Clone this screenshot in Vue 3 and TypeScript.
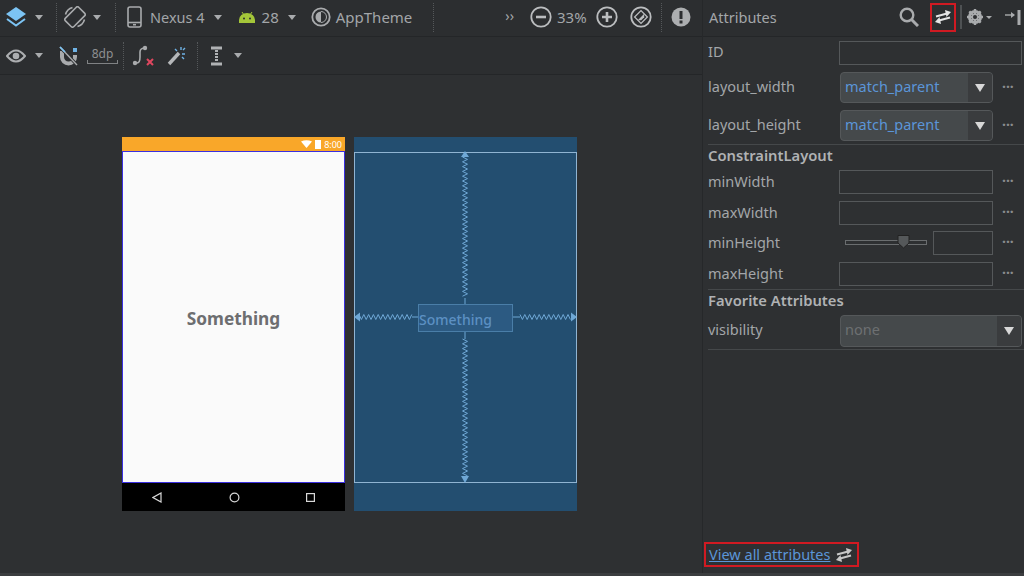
<script setup lang="ts">
const zigV = (x: number, y1: number, y2: number): string => {
  const pts: string[] = []
  let side = -1
  for (let y = y1; y <= y2; y += 2.4) {
    pts.push(`${x + side * 2.5},${y}`)
    side = -side
  }
  return pts.join(' ')
}
const zigH = (y: number, x1: number, x2: number): string => {
  const pts: string[] = []
  let side = -1
  for (let x = x1; x <= x2; x += 2.4) {
    pts.push(`${x},${y + side * 2.5}`)
    side = -side
  }
  return pts.join(' ')
}
const springs: string[] = [zigV(111, 6, 147), zigV(111, 188, 325), zigH(166, 5, 58), zigH(166, 166, 218)]
const constraintRows: { label: string; slider?: boolean }[] = [
  { label: 'minWidth' },
  { label: 'maxWidth' },
  { label: 'minHeight', slider: true },
  { label: 'maxHeight' }
]
const dropRows: string[] = ['layout_width', 'layout_height']
</script>

<template>
  <div class="app">
    <div class="main">
      <div class="left">
        <div class="bar bar1">
          <svg class="i ml5" width="22" height="22" viewBox="0 0 22 22"><path d="M11 1 21 8 11 15 1 8Z" fill="#7cc4f4"/><path d="M2 13 11 19.5 20 13" fill="none" stroke="#7cc4f4" stroke-width="2"/></svg>
          <span class="caret ml8"></span>
          <span class="sep ml13"></span>
          <svg class="i ml7" width="22" height="22" viewBox="0 0 22 22" fill="none" stroke="#a9abad" stroke-width="1.6"><rect x="5" y="1.5" width="12" height="19" rx="2" transform="rotate(45 11 11)"/><path d="M1.5 8.5A10 10 0 0 1 8.5 1.5M20.5 13.5A10 10 0 0 1 13.5 20.5"/></svg>
          <span class="caret ml7"></span>
          <span class="sep ml14"></span>
          <svg class="i ml11" width="15" height="22" viewBox="0 0 15 22" fill="none" stroke="#a9abad" stroke-width="1.6"><rect x="1" y="1" width="13" height="20" rx="2"/><path d="M1 16.5H14"/><path d="M6 18.7H9"/></svg>
          <span class="txt narrow ml8">Nexus 4</span>
          <span class="caret ml9"></span>
          <svg class="i ml17" width="16" height="11" viewBox="0 0 16 11"><path d="M0 11V8A8 7 0 0 1 16 8V11Z" fill="#a4c639"/><path d="M3 0 5 3M13 0 11 3" stroke="#a4c639" stroke-width="1"/><circle cx="5" cy="6.5" r="1" fill="#2c2e30"/><circle cx="11" cy="6.5" r="1" fill="#2c2e30"/></svg>
          <span class="txt ml7">28</span>
          <span class="caret ml9"></span>
          <svg class="i ml15" width="20" height="20" viewBox="0 0 20 20"><circle cx="10" cy="10" r="8.7" fill="none" stroke="#a9abad" stroke-width="1.8"/><path d="M10 4.5A5.5 5.5 0 0 0 10 15.5Z" fill="#a9abad"/><path d="M10 4.5A5.5 5.5 0 0 1 10 15.5" fill="none" stroke="#a9abad"/></svg>
          <span class="txt ml5">AppTheme</span>
          <span class="sep ml21"></span>
          <span class="more">››</span>
          <svg class="i ml16" width="22" height="22" viewBox="0 0 22 22" fill="none" stroke="#bbbdbf"><circle cx="11" cy="11" r="9.7" stroke-width="1.8"/><path d="M6 11H16" stroke-width="2.6"/></svg>
          <span class="txt ml5">33%</span>
          <svg class="i ml9" width="22" height="22" viewBox="0 0 22 22" fill="none" stroke="#bbbdbf"><circle cx="11" cy="11" r="9.7" stroke-width="1.8"/><path d="M6 11H16M11 6V16" stroke-width="2.6"/></svg>
          <svg class="i ml12" width="22" height="22" viewBox="0 0 22 22"><circle cx="11" cy="11" r="9.7" fill="none" stroke="#bbbdbf" stroke-width="1.8"/><rect x="6.5" y="6.5" width="9" height="9" fill="none" stroke="#bbbdbf" stroke-width="1.3" transform="rotate(45 11 11)"/><path d="M7.8 14.2 14.2 7.8 14.2 11.2 11.2 14.2Z" fill="#bbbdbf"/></svg>
          <span class="sep ml9"></span>
          <svg class="i ml9" width="20" height="20" viewBox="0 0 20 20"><circle cx="10" cy="10" r="9.5" fill="#acaeb0"/><rect x="8.5" y="4" width="3" height="8" fill="#2c2e30"/><rect x="8.5" y="13.5" width="3" height="3" fill="#2c2e30"/></svg>
        </div>
        <div class="bar bar2">
          <svg class="i ml6" width="20" height="14" viewBox="0 0 20 14"><path d="M1 7Q10 -4 19 7Q10 18 1 7Z" fill="none" stroke="#acaeb0" stroke-width="2"/><circle cx="10" cy="7" r="3.3" fill="#acaeb0"/></svg>
          <span class="caret ml9"></span>
          <svg class="i ml16" width="19" height="20" viewBox="0 0 19 20" fill="none"><path d="M3 5V11A6.5 6.5 0 0 0 16 11V9" stroke="#a9abad" stroke-width="4"/><path d="M1 1 18 19" stroke="#2c2e30" stroke-width="3"/><path d="M1 1 18 19" stroke="#a9abad" stroke-width="1.4"/><path d="M1 1 6 6" stroke="#7cc4f4" stroke-width="1.6"/><rect x="14" y="2" width="4" height="4" fill="#6fb3e6"/></svg>
          <div class="dp">8dp</div>
          <span class="sep short ml5"></span>
          <svg class="i ml8" width="22" height="22" viewBox="0 0 22 22" fill="none"><path d="M3 18H5Q8 18 8 12V7Q8 3 13 3" stroke="#a9abad" stroke-width="1.6"/><circle cx="3" cy="18" r="2.2" fill="#a9abad"/><circle cx="13" cy="3" r="2.2" fill="#a9abad"/><path d="M15 14 21 20M21 14 15 20" stroke="#e0475f" stroke-width="2"/></svg>
          <svg class="i ml13" width="19" height="20" viewBox="0 0 19 20" fill="none"><path d="M2 18 12 7" stroke="#b5b7b9" stroke-width="3.4"/><path d="M14 1V4M18 8H15M8 3 10 5M17 13 15 11M18 2 16 4" stroke="#6fb3e6" stroke-width="1.4"/></svg>
          <span class="sep short ml11"></span>
          <svg class="i ml12" width="13" height="20" viewBox="0 0 13 20" fill="none" stroke="#b0b2b4"><path d="M1 2H12M1 18H12" stroke-width="3"/><path d="M6.5 4V16" stroke-width="3" stroke-dasharray="2 1"/></svg>
          <span class="caret ml11"></span>
        </div>
        <div class="canvas">
          <div class="phone">
            <div class="status">
              <svg width="11" height="8" viewBox="0 0 11 8"><path d="M0 1.5Q5.5 -1 11 1.5L5.5 8Z" fill="#fff"/></svg>
              <span class="batt"></span>
              <span class="clock">8:00</span>
            </div>
            <div class="screen"><span class="something">Something</span></div>
            <div class="nav">
              <svg width="10" height="11" viewBox="0 0 10 11"><path d="M9 1V10L1 5.5Z" fill="none" stroke="#d8d8d8" stroke-width="1.2"/></svg>
              <svg width="11" height="11" viewBox="0 0 11 11"><circle cx="5.5" cy="5.5" r="4.4" fill="none" stroke="#d8d8d8" stroke-width="1.2"/></svg>
              <svg width="9" height="9" viewBox="0 0 9 9"><rect x=".6" y=".6" width="7.8" height="7.8" fill="none" stroke="#d8d8d8" stroke-width="1.2"/></svg>
            </div>
          </div>
          <div class="blue">
            <div class="bluescreen">
              <div class="widget">Something</div>
              <svg class="springs" width="223" height="332" viewBox="0 0 223 332" fill="none">
                <polyline v-for="(p, n) in springs" :key="n" :points="p" stroke="#6fa8d6" stroke-width="1"/>
                <path d="M111 147V153M111 181V188M58 166H64M159 166H166" stroke="#6fa8d6"/>
                <path d="M111 0 115 6H107ZM111 332 115 325H107ZM0 166 6 161.500V170.500ZM223 166 217 161.500V170.500Z" fill="#6fa8d6"/>
              </svg>
            </div>
          </div>
        </div>
      </div>
      <div class="panel">
        <div class="phead">
          <span class="ptitle">Attributes</span>
          <svg class="i search" width="20" height="20" viewBox="0 0 20 20" fill="none" stroke="#a9abad"><circle cx="8" cy="8" r="6.3" stroke-width="2.4"/><path d="M12.5 12.5 19 19" stroke-width="3"/></svg>
          <span class="redbox top"><svg width="18" height="16" viewBox="0 0 18 16" fill="none" stroke="#e4e4e4" stroke-width="2"><path d="M2 7.500 13 4.500"/><path d="M11 1 17 3 12.500 8Z" fill="#e4e4e4" stroke="none"/><path d="M16 8.500 5 11.500"/><path d="M7 15 1 13 5.500 8Z" fill="#e4e4e4" stroke="none"/></svg></span>
          <span class="sep solid ml4"></span>
          <svg class="i ml5" width="16" height="16" viewBox="0 0 16 16"><circle cx="8" cy="8" r="5.6" fill="none" stroke="#a9abad" stroke-width="3"/><path d="M8 0V16M0 8H16M2.300 2.300 13.700 13.700M13.700 2.300 2.300 13.700" stroke="#a9abad" stroke-width="2.4"/><circle cx="8" cy="8" r="2" fill="#2c2e30"/></svg>
          <span class="caret tiny ml3"></span>
          <svg class="i ml13" width="16" height="15" viewBox="0 0 16 15" fill="none"><path d="M0 5H9" stroke="#a9abad" stroke-width="1.4"/><path d="M6 2 10 5 6 8Z" fill="#a9abad"/><rect x="12.500" y="0" width="3" height="15" fill="#a9abad"/></svg>
        </div>
        <div class="row idrow">
          <span class="label">ID</span>
          <span class="input wide"></span>
        </div>
        <div v-for="r in dropRows" :key="r" class="row droprow">
          <span class="label">{{ r }}</span>
          <span class="drop"><span class="val">match_parent</span><span class="arrow"><i></i></span></span>
          <span class="dots">···</span>
        </div>
        <div class="hr"></div>
        <div class="section first">ConstraintLayout</div>
        <div v-for="r in constraintRows" :key="r.label" class="row crow">
          <span class="label">{{ r.label }}</span>
          <span v-if="r.slider" class="slider"><span class="track"></span><svg class="thumb" width="13" height="14" viewBox="0 0 13 14"><path d="M1 .5H12V8L6.500 13 1 8Z" fill="#55585a" stroke="#222"/></svg></span>
          <span class="input" :class="r.slider ? 'small' : 'mid'"></span>
          <span class="dots">···</span>
        </div>
        <div class="hr"></div>
        <div class="section second">Favorite Attributes</div>
        <div class="row visrow">
          <span class="label">visibility</span>
          <span class="drop vis"><span class="val none">none</span><span class="arrow"><i></i></span></span>
        </div>
        <div class="hr last"></div>
        <div class="foot">
          <span class="redbox link"><a class="lnk">View all attributes</a><svg width="18" height="16" viewBox="0 0 18 16" fill="none" stroke="#c8c8c8" stroke-width="2"><path d="M2 7.500 13 4.500"/><path d="M11 1 17 3 12.500 8Z" fill="#c8c8c8" stroke="none"/><path d="M16 8.500 5 11.500"/><path d="M7 15 1 13 5.500 8Z" fill="#c8c8c8" stroke="none"/></svg></span>
        </div>
      </div>
    </div>
    <div class="strip"></div>
  </div>
</template>

<style>
html, body { margin: 0; background: #2d2f31; }
</style>

<style scoped>
.app { width: 1024px; height: 576px; display: flex; flex-direction: column; overflow: hidden; background: #2e3032; font-family: "Noto Sans", "Open Sans", sans-serif; color: #a9abad; }
.main { flex: 1; display: flex; min-height: 0; }
.strip { height: 3px; flex: none; background: #3b3d3f; }
.ml3 { margin-left: 3px; } .ml4 { margin-left: 4px; } .ml5 { margin-left: 5px; } .ml6 { margin-left: 6px; } .ml7 { margin-left: 7px; } .ml8 { margin-left: 8px; } .ml9 { margin-left: 9px; } .ml11 { margin-left: 11px; } .ml12 { margin-left: 12px; } .ml13 { margin-left: 13px; } .ml14 { margin-left: 14px; } .ml15 { margin-left: 15px; } .ml16 { margin-left: 16px; } .ml17 { margin-left: 17px; } .ml21 { margin-left: 21px; }
.left { width: 702px; display: flex; flex-direction: column; border-right: 1px solid #26282a; }
.bar { display: flex; align-items: center; background: #2c2e30; border-bottom: 1px solid #242628; flex: none; }
.bar1 { height: 34px; padding-bottom: 2px; }
.bar2 { height: 37px; }
.i { flex: none; display: block; }
.caret { width: 0; height: 0; border-left: 4.5px solid transparent; border-right: 4.5px solid transparent; border-top: 5px solid #a9abad; flex: none; }
.caret.tiny { border-left-width: 3px; border-right-width: 3px; border-top-width: 3px; }
.sep { width: 0; height: 29px; border-left: 1px dotted #55585a; flex: none; }
.sep.short { height: 28px; }
.sep.solid { height: 24px; border-left: 2px solid #4e5153; }
.txt { font-size: 15px; color: #a3a6a9; white-space: nowrap; line-height: 20px; }
.txt.narrow { font-size: 14.5px; }
.more { font-size: 14px; line-height: 14px; color: #a3a6a9; margin: -3px 0 0 71px; }
.dp { position: relative; margin-left: 9px; width: 31px; height: 17px; box-sizing: border-box; font-size: 12px; line-height: 14px; text-align: center; color: #8e9092; flex: none; }
.dp::after { content: ""; position: absolute; left: 0; right: 0; bottom: 0; height: 4px; box-sizing: border-box; border: 1px solid #808284; border-top: none; }
.canvas { flex: 1; display: flex; gap: 9px; padding: 62px 0 0 122px; background: #2e3032; }
.phone, .blue { width: 223px; height: 374px; display: flex; flex-direction: column; flex: none; }
.status { height: 14px; background: #f9a729; display: flex; align-items: center; justify-content: flex-end; gap: 3px; padding-right: 3px; box-sizing: border-box; }
.batt { width: 6px; height: 9px; background: #fff; }
.clock { font-size: 9px; line-height: 9px; color: #fff; margin-top: 1px; }
.screen { height: 332px; background: #fafafa; border: 1px solid #3a2fe0; box-sizing: border-box; display: flex; align-items: center; justify-content: center; padding-top: 2px; }
.something { font-size: 17.3px; font-weight: 700; color: #6d6e70; }
.nav { flex: 1; background: #000; display: flex; align-items: center; justify-content: space-between; padding: 0 30px; }
.blue { background: #234e70; padding-top: 15px; box-sizing: border-box; }
.bluescreen { position: relative; height: 331px; border: 1px solid #90b4d2; box-sizing: border-box; display: flex; align-items: center; justify-content: center; }
.widget { width: 95px; height: 28px; box-sizing: border-box; background: #2c5a82; border: 1px solid #4a7ea8; color: #5c90c2; font-size: 14px; font-weight: 500; line-height: 29px; white-space: nowrap; z-index: 1; margin-top: 1px; }
.springs { position: absolute; left: -1px; top: -2px; }
.panel { flex: 1; display: flex; flex-direction: column; background: #2e3032; min-width: 0; }
.phead { height: 37px; flex: none; display: flex; align-items: center; background: #2c2e30; border-bottom: 1px solid #242628; box-sizing: border-box; padding: 0 0 2px 6px; }
.ptitle { font-size: 14.5px; color: #a3a6a9; width: 58px; flex: none; white-space: nowrap; }
.search { margin-left: 132px; }
.redbox { border: 2px solid #d01a22; box-sizing: border-box; display: flex; align-items: center; flex: none; }
.redbox.top { width: 26px; height: 29px; justify-content: center; margin-left: 11px; }
.row { display: flex; align-items: center; padding-left: 5px; flex: none; }
.label { width: 131px; flex: none; font-size: 14.5px; color: #a3a6a9; padding-bottom: 4px; }
.crow .label { padding-bottom: 2px; }
.input { border: 1px solid #55585a; box-sizing: border-box; height: 24px; flex: none; display: block; }
.input.wide { width: 183px; }
.input.mid { width: 154px; }
.input.small { width: 60px; }
.idrow { height: 24px; margin-top: 4px; }
.droprow { height: 31px; margin-top: 7px; }
.drop { margin-left: 1px; width: 153px; height: 31px; border: 1px solid #55585a; box-sizing: border-box; border-radius: 4px; background: #45494b; display: flex; align-items: center; justify-content: space-between; overflow: hidden; flex: none; }
.val { color: #5b95d8; font-size: 14.5px; padding: 0 0 3px 4px; }
.val.none { color: #6d7072; }
.arrow { width: 24px; align-self: stretch; background: #3a3c3e; display: flex; align-items: center; justify-content: center; }
.arrow i { width: 0; height: 0; border-left: 5px solid transparent; border-right: 5px solid transparent; border-top: 8px solid #d8d8d8; }
.dots { margin-left: 9px; font-size: 14px; font-weight: 700; color: #8a8c8e; line-height: 14px; padding-bottom: 2px; }
.hr { height: 1px; background: #45484a; margin: 3px 0 0 5px; width: 316px; flex: none; }
.section { font-size: 14.75px; font-weight: 600; color: #b0b2b4; padding-left: 5px; height: 20px; line-height: 18px; flex: none; white-space: nowrap; }
.section.first { margin-top: 1px; }
.crow { height: 24px; margin-top: 6.67px; }
.section.first + .crow { margin-top: 4px; }
.slider { width: 94px; height: 24px; position: relative; flex: none; }
.track { position: absolute; left: 6px; top: 9px; width: 82px; height: 5px; box-sizing: border-box; border: 1px solid #6a6d6f; }
.thumb { position: absolute; left: 58px; top: 4px; }
.section.second { margin-top: 1px; }
.visrow { height: 32px; margin-top: 4px; }
.drop.vis { width: 182px; height: 32px; }
.hr.last { margin-top: 2px; }
.foot { margin-top: auto; padding: 0 0 6px 1px; }
.redbox.link { width: 155px; height: 25px; padding-left: 3px; gap: 5px; }
.lnk { font-size: 14.5px; color: #5b95d8; text-decoration: underline; white-space: nowrap; line-height: 20px; padding-bottom: 2px; }
</style>
